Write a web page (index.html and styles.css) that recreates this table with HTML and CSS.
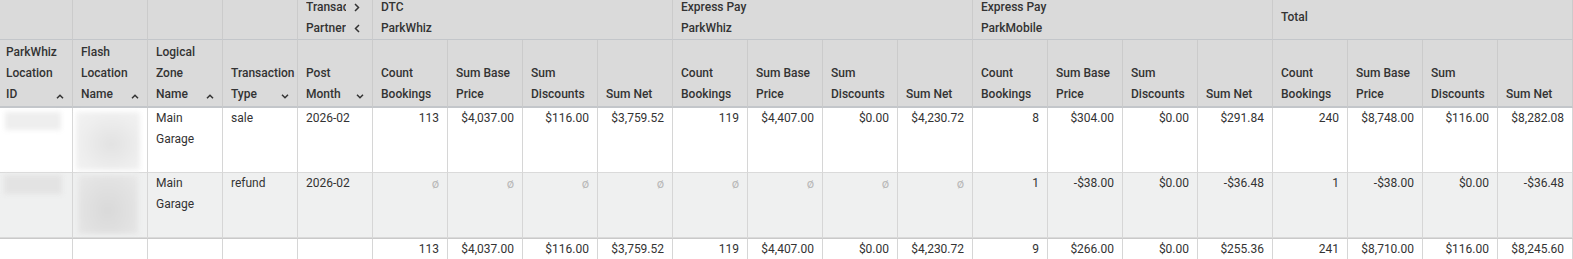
FILE: index.html
```html
<!DOCTYPE html>
<html>
<head>
<meta charset="utf-8">
<link rel="stylesheet" href="styles.css">
</head>
<body>
<table class="grid">
  <colgroup>
    <col><col><col><col><col><col><col><col><col><col><col><col><col><col><col><col><col><col><col><col><col>
  </colgroup>
  <thead>
    <tr class="r1">
      <th></th><th></th><th></th><th></th>
      <th>
        <div class="pivot"><span class="plabel">Transaction Type</span><svg class="pic" width="6" height="9" viewBox="0 0 6 9"><path d="M1 1l3.5 3.5L1 8" fill="none" stroke="#333" stroke-width="1.5"/></svg></div>
        <div class="pivot"><span class="plabel">Partner</span><svg class="pic" width="6" height="9" viewBox="0 0 6 9"><path d="M5 1L1.5 4.5 5 8" fill="none" stroke="#333" stroke-width="1.5"/></svg></div>
      </th>
      <th colspan="4">DTC<br>ParkWhiz</th>
      <th colspan="4">Express Pay<br>ParkWhiz</th>
      <th colspan="4">Express Pay<br>ParkMobile</th>
      <th colspan="4" class="mid">Total</th>
    </tr>
    <tr class="r2">
      <th><div class="sort"><span class="lbl">ParkWhiz Location ID</span><svg class="chev" width="8" height="5" viewBox="0 0 8 5"><path d="M1 4.2L4 1.2 7 4.2" fill="none" stroke="#333" stroke-width="1.5"/></svg></div></th>
      <th><div class="sort"><span class="lbl">Flash Location Name</span><svg class="chev" width="8" height="5" viewBox="0 0 8 5"><path d="M1 4.2L4 1.2 7 4.2" fill="none" stroke="#333" stroke-width="1.5"/></svg></div></th>
      <th><div class="sort"><span class="lbl">Logical Zone Name</span><svg class="chev" width="8" height="5" viewBox="0 0 8 5"><path d="M1 4.2L4 1.2 7 4.2" fill="none" stroke="#333" stroke-width="1.5"/></svg></div></th>
      <th><div class="sort"><span class="lbl">Transaction Type</span><svg class="chev" width="8" height="5" viewBox="0 0 8 5"><path d="M1 0.8L4 3.8 7 0.8" fill="none" stroke="#333" stroke-width="1.5"/></svg></div></th>
      <th><div class="sort"><span class="lbl">Post Month</span><svg class="chev" width="8" height="5" viewBox="0 0 8 5"><path d="M1 0.8L4 3.8 7 0.8" fill="none" stroke="#333" stroke-width="1.5"/></svg></div></th>
      <th>Count Bookings</th><th>Sum Base Price</th><th>Sum Discounts</th><th>Sum Net</th>
      <th>Count Bookings</th><th>Sum Base Price</th><th>Sum Discounts</th><th>Sum Net</th>
      <th>Count Bookings</th><th>Sum Base Price</th><th>Sum Discounts</th><th>Sum Net</th>
      <th>Count Bookings</th><th>Sum Base Price</th><th>Sum Discounts</th><th>Sum Net</th>
    </tr>
  </thead>
  <tbody>
    <tr>
      <td><div class="redact r-a"></div></td>
      <td><div class="redact r-b"></div></td>
      <td>Main Garage</td>
      <td>sale</td>
      <td>2026-02</td>
      <td class="num">113</td><td class="num">$4,037.00</td><td class="num">$116.00</td><td class="num">$3,759.52</td>
      <td class="num">119</td><td class="num">$4,407.00</td><td class="num">$0.00</td><td class="num">$4,230.72</td>
      <td class="num">8</td><td class="num">$304.00</td><td class="num">$0.00</td><td class="num">$291.84</td>
      <td class="num">240</td><td class="num">$8,748.00</td><td class="num">$116.00</td><td class="num">$8,282.08</td>
    </tr>
    <tr class="alt">
      <td><div class="redact r-c"></div></td>
      <td><div class="redact r-d"></div></td>
      <td>Main Garage</td>
      <td>refund</td>
      <td>2026-02</td>
      <td class="num null">ø</td><td class="num null">ø</td><td class="num null">ø</td><td class="num null">ø</td>
      <td class="num null">ø</td><td class="num null">ø</td><td class="num null">ø</td><td class="num null">ø</td>
      <td class="num">1</td><td class="num">-$38.00</td><td class="num">$0.00</td><td class="num">-$36.48</td>
      <td class="num">1</td><td class="num">-$38.00</td><td class="num">$0.00</td><td class="num">-$36.48</td>
    </tr>
  </tbody>
  <tfoot>
    <tr>
      <td></td><td></td><td></td><td></td><td></td>
      <td class="num">113</td><td class="num">$4,037.00</td><td class="num">$116.00</td><td class="num">$3,759.52</td>
      <td class="num">119</td><td class="num">$4,407.00</td><td class="num">$0.00</td><td class="num">$4,230.72</td>
      <td class="num">9</td><td class="num">$266.00</td><td class="num">$0.00</td><td class="num">$255.36</td>
      <td class="num">241</td><td class="num">$8,710.00</td><td class="num">$116.00</td><td class="num">$8,245.60</td>
    </tr>
  </tfoot>
</table>
</body>
</html>
```
FILE: styles.css
```css
html, body {
  margin: 0;
  padding: 0;
  overflow: hidden;
  background: #ffffff;
}
body {
  font-family: Roboto, "Liberation Sans", sans-serif;
  font-size: 12px;
  line-height: 21px;
  color: #333333;
}
.grid {
  margin: -4px 0 0 -2px;
  border-collapse: separate;
  border-spacing: 0;
  table-layout: fixed;
  width: 1575px;
}
.grid col {
  width: 75px;
}
.grid th,
.grid td {
  box-sizing: border-box;
  padding: 0 8px;
  border-right: 1px solid #d6d6d6;
  text-align: left;
  vertical-align: top;
  font-weight: 400;
  overflow: visible;
}
.grid thead th {
  background: #dadada;
  font-weight: 500;
  border-right-color: #cbcbcb;
}
.r1 {
  height: 44px;
}
.r1 th {
  padding-top: 1px;
  border-bottom: 1px solid #c3c6ca;
}
.r1 th.mid {
  vertical-align: middle;
  padding-top: 0;
}
.r2 {
  height: 68px;
}
.r2 th {
  vertical-align: bottom;
  padding-bottom: 1px;
  border-bottom: 2px solid #c3c6ca;
}
.pivot {
  display: flex;
  align-items: center;
}
.plabel {
  width: 40px;
  flex: 0 0 40px;
  overflow: hidden;
  white-space: nowrap;
}
.pic {
  margin-left: 8px;
  flex-shrink: 0;
}
.sort {
  display: flex;
  align-items: flex-end;
}
.lbl {
  flex: 1 1 auto;
  min-width: 0;
}
.chev {
  flex-shrink: 0;
  margin: 0 0 6px 2px;
}
tbody tr {
  height: 65px;
}
tbody td {
  border-bottom: 1px solid #dadada;
  background: #ffffff;
}
tbody tr.alt td {
  background: #eff0f0;
}
tfoot tr {
  height: 30px;
}
tfoot td {
  border-top: 1px solid #c9c9c9;
}
.num {
  text-align: right !important;
}
.null {
  color: #bababa;
  font-size: 13px;
}
.redact {
  filter: blur(2.5px);
}
.r-a {
  width: 56px;
  height: 18px;
  margin: 4px 0 0 -1px;
  background: #eeeeee;
}
.r-b {
  width: 64px;
  height: 58px;
  margin: 4px 0 0 -5px;
  background: radial-gradient(ellipse at 55% 55%, #e2e2e2 0%, #eeeeee 60%, #f3f3f3 100%);
}
.r-c {
  width: 58px;
  height: 19px;
  margin: 2px 0 0 -2px;
  background: #e3e3e3;
}
.r-d {
  width: 60px;
  height: 59px;
  margin: 2px 0 0 -3px;
  background: radial-gradient(ellipse at 50% 60%, #d9d9d9 0%, #e2e2e2 60%, #e8e8e8 100%);
}
```
